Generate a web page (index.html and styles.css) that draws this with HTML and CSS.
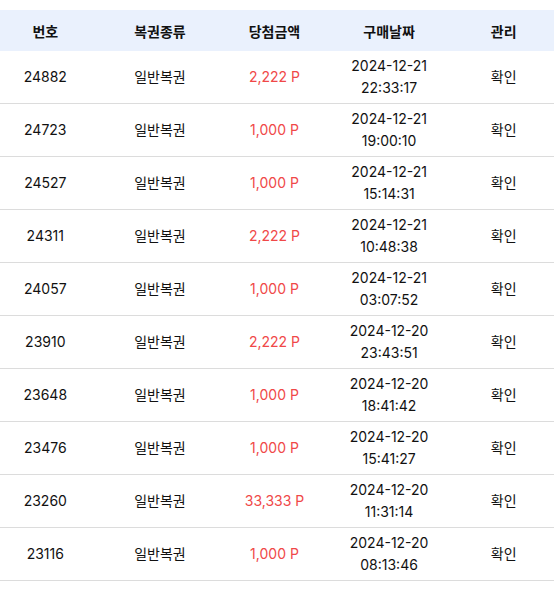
FILE: index.html
```html
<!DOCTYPE html>
<html lang="ko">
<head>
<meta charset="utf-8">
<link rel="stylesheet" href="styles.css">
</head>
<body>
<div class="wrap">
<table class="list">
  <thead>
    <tr><th>번호</th><th>복권종류</th><th>당첨금액</th><th>구매날짜</th><th>관리</th></tr>
  </thead>
  <tbody>
    <tr><td>24882</td><td>일반복권</td><td class="prize">2,222 P</td><td>2024-12-21<br>22:33:17</td><td>확인</td></tr>
    <tr><td>24723</td><td>일반복권</td><td class="prize">1,000 P</td><td>2024-12-21<br>19:00:10</td><td>확인</td></tr>
    <tr><td>24527</td><td>일반복권</td><td class="prize">1,000 P</td><td>2024-12-21<br>15:14:31</td><td>확인</td></tr>
    <tr><td>24311</td><td>일반복권</td><td class="prize">2,222 P</td><td>2024-12-21<br>10:48:38</td><td>확인</td></tr>
    <tr><td>24057</td><td>일반복권</td><td class="prize">1,000 P</td><td>2024-12-21<br>03:07:52</td><td>확인</td></tr>
    <tr><td>23910</td><td>일반복권</td><td class="prize">2,222 P</td><td>2024-12-20<br>23:43:51</td><td>확인</td></tr>
    <tr><td>23648</td><td>일반복권</td><td class="prize">1,000 P</td><td>2024-12-20<br>18:41:42</td><td>확인</td></tr>
    <tr><td>23476</td><td>일반복권</td><td class="prize">1,000 P</td><td>2024-12-20<br>15:41:27</td><td>확인</td></tr>
    <tr><td>23260</td><td>일반복권</td><td class="prize">33,333 P</td><td>2024-12-20<br>11:31:14</td><td>확인</td></tr>
    <tr><td>23116</td><td>일반복권</td><td class="prize">1,000 P</td><td>2024-12-20<br>08:13:46</td><td>확인</td></tr>
  </tbody>
</table>
</div>
</body>
</html>
```
FILE: styles.css
```css
html, body {
  margin: 0;
  padding: 0;
  background: #fff;
}
body {
  font-family: Inter, "Noto Sans CJK KR", sans-serif;
  color: #111;
  overflow: hidden;
}
.wrap {
  padding-top: 10px;
  overflow: hidden;
  width: 554px;
}
.list {
  width: 573px;
  margin-left: -12px;
  border-collapse: collapse;
  table-layout: fixed;
  font-size: 14px;
}
.list th {
  background: #eaf1fd;
  height: 41px;
  font-weight: 700;
  text-align: center;
  padding: 0;
  color: #111;
}
.list td {
  height: 52px;
  padding: 0;
  text-align: center;
  vertical-align: middle;
  line-height: 22px;
  border-bottom: 1px solid #dcdcdc;
}
.list td.prize {
  color: #f04848;
}
```
